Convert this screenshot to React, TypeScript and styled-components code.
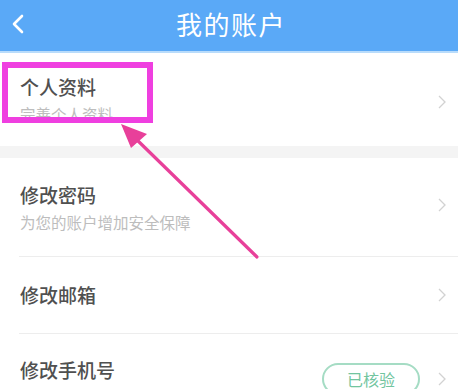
import React from "react"
import styled, { createGlobalStyle } from "styled-components"

const GlobalStyle = createGlobalStyle`
  html, body {
    margin: 0;
    padding: 0;
    background: #ffffff;
  }
  body {
    font-family: "Noto Sans CJK SC", "Noto Sans", sans-serif;
  }
`

const Screen = styled.div`
  position: relative;
  width: 458px;
  height: 389px;
  overflow: hidden;
  background: #ffffff;
`

const Header = styled.div`
  height: 51px;
  background: #5aa9f7;
  border-bottom: 2px solid #b9dcfb;
  display: flex;
  align-items: center;
  justify-content: center;
  position: relative;
`

const BackButton = styled.div`
  position: absolute;
  left: 11px;
  top: 14px;
  width: 16px;
  height: 20px;
  display: flex;
`

const HeaderTitle = styled.h1`
  margin: 0;
  font-size: 26px;
  font-weight: 400;
  color: #ffffff;
  letter-spacing: 1.5px;
  line-height: 1;
  padding-bottom: 4px;
  padding-left: 4px;
`

interface RowProps {
  $height: number
}

const Row = styled.div<RowProps>`
  height: ${props => props.$height}px;
  display: flex;
  align-items: center;
  padding: 0 12px 0 20px;
  box-sizing: border-box;
`

interface TextBlockProps {
  $shift?: number
}

const TextBlock = styled.div<TextBlockProps>`
  flex-grow: 1;
  display: flex;
  flex-direction: column;
  gap: 7px;
  margin-top: ${props => props.$shift || 0}px;
`

const RowTitle = styled.div`
  font-size: 19px;
  line-height: 22px;
  font-weight: 500;
  color: #505050;
`

const RowSubtitle = styled.div`
  font-size: 15.5px;
  line-height: 18px;
  color: #bdbdbd;
`

const Band = styled.div`
  height: 12px;
  background: #f4f4f4;
`

const Divider = styled.div`
  height: 1px;
  margin-left: 19px;
  background: #ededed;
`

const Badge = styled.div`
  margin-top: 14px;
  margin-right: 18px;
  height: 28px;
  padding: 0 23px;
  border: 2px solid #a5dcc4;
  border-radius: 16px;
  display: flex;
  align-items: center;
  font-size: 16px;
  color: #72c59f;
`

interface ChevronProps {
  $offset?: number
}

const Chevron = styled.svg<ChevronProps>`
  width: 8px;
  height: 14px;
  flex-shrink: 0;
  margin-top: ${props => props.$offset || 0}px;
`

const Highlight = styled.div`
  position: absolute;
  left: 2px;
  top: 62px;
  width: 151px;
  height: 61px;
  box-sizing: border-box;
  border: 6px solid #ef3fe0;
`

const ArrowLayer = styled.svg`
  position: absolute;
  left: 0;
  top: 0;
  pointer-events: none;
`

function RightChevron({ offset }: { offset?: number }) {
  return (
    <Chevron $offset={offset} viewBox="0 0 8 14">
      <polyline points="1,1 7,7 1,13" fill="none" stroke="#d2d2d2" strokeWidth="1.3" />
    </Chevron>
  )
}

export default function App() {
  return (
    <Screen>
      <GlobalStyle />
      <Header>
        <BackButton>
          <svg width="16" height="20" viewBox="0 0 16 20">
            <polyline points="11,2 3,10 11,18" fill="none" stroke="#ffffff" strokeWidth="2.6" strokeLinecap="round" strokeLinejoin="round" />
          </svg>
        </BackButton>
        <HeaderTitle>我的账户</HeaderTitle>
      </Header>

      <Row $height={93}>
        <TextBlock>
          <RowTitle>个人资料</RowTitle>
          <RowSubtitle>完善个人资料</RowSubtitle>
        </TextBlock>
        <RightChevron offset={4} />
      </Row>
      <Band />

      <Row $height={98}>
        <TextBlock>
          <RowTitle>修改密码</RowTitle>
          <RowSubtitle>为您的账户增加安全保障</RowSubtitle>
        </TextBlock>
        <RightChevron offset={-4} />
      </Row>
      <Divider />

      <Row $height={76}>
        <TextBlock>
          <RowTitle>修改邮箱</RowTitle>
        </TextBlock>
        <RightChevron />
      </Row>
      <Divider />

      <Row $height={76}>
        <TextBlock $shift={-4}>
          <RowTitle>修改手机号</RowTitle>
        </TextBlock>
        <Badge>已核验</Badge>
        <RightChevron offset={14} />
      </Row>

      <Highlight />
      <ArrowLayer width="458" height="389" viewBox="0 0 458 389">
        <line x1="257" y1="257" x2="134" y2="137" stroke="#e8409a" strokeWidth="3.2" strokeLinecap="round" />
        <polygon points="121,124 147,134 131,148" fill="#e8409a" />
      </ArrowLayer>
    </Screen>
  )
}
